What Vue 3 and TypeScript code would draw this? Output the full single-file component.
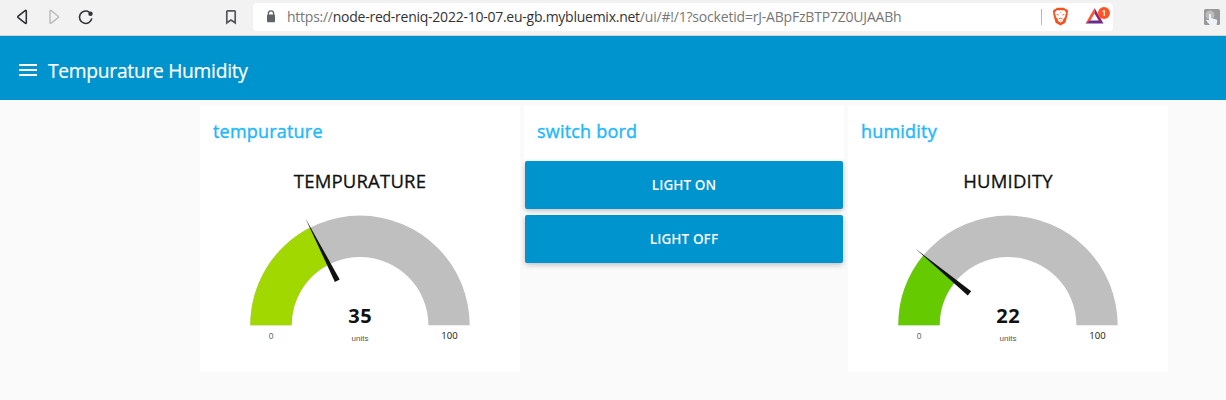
<script setup lang="ts">
interface Gauge {
  value: number
  fill: string
}

const temperature: Gauge = { value: 35, fill: '#a0d800' }
const humidity: Gauge = { value: 22, fill: '#65cb00' }

const panels = [
  { id: 't', title: 'tempurature', label: 'TEMPURATURE', gauge: temperature },
  { id: 's', title: 'switch bord', buttons: ['LIGHT ON', 'LIGHT OFF'] },
  { id: 'h', title: 'humidity', label: 'HUMIDITY', gauge: humidity },
]

const CX = 160
const CY = 125.3
const OUTER = 109.7
const INNER = 68.4

function point(percent: number, radius: number): [number, number] {
  const a = Math.PI * (1 - percent / 100)
  return [CX + radius * Math.cos(a), CY - radius * Math.sin(a)]
}

function arc(percent: number): string {
  const [x1, y1] = point(percent, OUTER)
  const [x2, y2] = point(percent, INNER)
  return `M${CX - OUTER} ${CY}A${OUTER} ${OUTER} 0 0 1 ${x1} ${y1}L${x2} ${y2}A${INNER} ${INNER} 0 0 0 ${CX - INNER} ${CY}Z`
}

function needle(percent: number): string {
  const [tx, ty] = point(percent, 120)
  const [bx, by] = point(percent, 50)
  const a = Math.PI * (1 - percent / 100)
  const dx = Math.sin(a) * 2.7
  const dy = Math.cos(a) * 2.7
  return `M${tx} ${ty}L${bx + dx} ${by + dy}L${bx - dx} ${by - dy}Z`
}
</script>

<template>
  <div class="window">
    <div class="browser">
      <svg class="nav" width="120" height="35" viewBox="0 0 120 35">
        <path d="M26.3 11.2v11.4q0 1.4-1.2.6l-6.9-5.6q-.8-.7 0-1.4l6.9-5.6q1.2-.8 1.2.6Z" fill="none" stroke="#303234" stroke-width="1.6" />
        <path d="M50 11.2v11.4q0 1.4 1.2.6l6.9-5.6q.8-.7 0-1.4l-6.9-5.6q-1.2-.8-1.2.6Z" fill="none" stroke="#bdbdbd" stroke-width="1.5" />
        <path d="M89.2 12.1A6.2 6.2 0 1 0 91.8 18.4" fill="none" stroke="#303234" stroke-width="1.6" />
        <circle cx="90.5" cy="13.7" r="2.2" fill="#303234" />
      </svg>
      <svg class="bookmark" width="12" height="16" viewBox="0 0 12 16">
        <path d="M2.6 1.8h6.8q.8 0 .8.8v11.2L6 11l-4.2 2.8V2.6q0-.8.8-.8Z" fill="none" stroke="#55575a" stroke-width="1.7" />
      </svg>
      <div class="address">
        <svg class="lock" width="10" height="13" viewBox="0 0 10 13">
          <path d="M2.4 6V3.4a2.6 2.6 0 0 1 5.2 0V6" fill="none" stroke="#5f6368" stroke-width="1.3" />
          <rect x="1" y="4.5" width="8" height="7.7" rx="1" fill="#5f6368" />
        </svg>
        <span class="url"><i>https://</i>node-red-reniq-2022-10-07.eu-gb.mybluemix.net<i class="path">/ui/#!/1?socketid=rJ-ABpFzBTP7Z0UJAABh</i></span>
        <span class="divider"></span>
        <svg class="shield" width="17" height="19" viewBox="0 0 17 19">
          <path d="M5 .7h7l1.6 1.6 1.2-.1 1.4 2-.6 1.8.2 1-2 7.6q-.3 1-1.2 1.6L8.5 18.4l-4.1-2.2q-.9-.6-1.2-1.6L1.2 7l.2-1L.8 4.2l1.4-2 1.2.1Z" fill="#f4511e" />
          <path d="M5 3 7 3.4 8.5 3 10 3.4 12 3 14.2 5.6 13.4 8 13 10 11.2 12.2 11 14 8.5 15.6 6 14 5.800 12.2 4 10 3.6 8 2.800 5.6Z" fill="#fff" />
          <path d="M4.600 7.400 6.700 8M12.400 7.400 10.300 8M6.600 12l1.900-.9 1.900.9" fill="none" stroke="#f4511e" stroke-width=".9" />
          <path d="M7.600 5.500h1.800M8.500 13v1" fill="none" stroke="#f78b68" stroke-width=".7" />
        </svg>
        <div class="rewards">
          <svg width="20" height="18" viewBox="0 0 20 18">
            <path d="M9.500 1 .5 16.500 5 14 9.500 6.500Z" fill="#ff5630" />
            <path d="M9.500 1 18.500 16.500 14 14 9.500 6.500Z" fill="#9e1f63" />
            <path d="M.5 16.500H18.500L14.500 13.500H5Z" fill="#662d91" />
          </svg>
          <b class="badge">1</b>
        </div>
      </div>
      <svg class="extension" width="16" height="16" viewBox="0 0 16 16">
        <rect width="16" height="16" rx="1.5" fill="#999" />
        <circle cx="6" cy="6" r="4.5" fill="#bdbdbd" />
        <path d="M5 5.500q1-1.500 2 0V9l5.500 1.500q1 .5.700 2L12.500 16H6L2 11.500q.5-1.500 3 0Z" fill="#edf3f8" />
      </svg>
    </div>

    <header class="toolbar">
      <div class="menu"><span></span><span></span><span></span></div>
      <h1>Tempurature Humidity</h1>
    </header>

    <main>
      <section v-for="panel in panels" :key="panel.id" :class="['card', panel.id]">
        <h2>{{ panel.title }}</h2>
        <template v-if="panel.gauge">
          <h3>{{ panel.label }}</h3>
          <svg class="gauge" width="320" height="172" viewBox="0 0 320 172">
            <path :d="arc(100)" fill="#bfbfbf" />
            <path :d="arc(panel.gauge.value)" :fill="panel.gauge.fill" />
            <path :d="needle(panel.gauge.value)" fill="#111" />
            <text class="value" x="160.3" y="122.5">{{ panel.gauge.value }}</text>
            <text class="units" x="160" y="141">units</text>
            <text class="min" x="71" y="139">0</text>
            <text class="max" x="249.5" y="139">100</text>
          </svg>
        </template>
        <div v-else class="buttons">
          <button v-for="label in panel.buttons" :key="label">{{ label }}</button>
        </div>
      </section>
    </main>
  </div>
</template>

<style>
body {
  background: #fafafa;
}
</style>

<style scoped>
.window {
  height: 400px;
  overflow: hidden;
  background: #fafafa;
  font-family: "Open Sans", "Noto Sans", sans-serif;
}
.browser {
  display: flex;
  box-sizing: border-box;
  height: 36px;
  background: #f2f2f2;
  border-bottom: 1px solid #d5d5d5;
}
.nav {
  flex: none;
}
.bookmark {
  margin: 9px 0 0 105px;
}
.address {
  display: flex;
  box-sizing: border-box;
  width: 860px;
  height: 28px;
  margin: 3px 0 0 16px;
  padding-left: 13px;
  background: #fff;
  border-radius: 4px;
}
.address > * {
  flex: none;
}
.lock {
  margin-top: 7px;
}
.url {
  width: 754px;
  margin-left: 11px;
  color: #333;
  font-size: 14px;
  letter-spacing: -0.25px;
  line-height: 28px;
  white-space: nowrap;
}
.url i {
  color: #777;
  font-style: normal;
}
.url .path {
  letter-spacing: -0.2px;
}
.divider {
  width: 1px;
  height: 16px;
  margin-top: 6px;
  background: #b8b8b8;
}
.shield {
  margin: 4px 0 0 10px;
}
.rewards {
  position: relative;
  margin: 4px 0 0 16px;
}
.badge {
  position: absolute;
  top: 0;
  left: 13px;
  width: 12px;
  height: 12px;
  border-radius: 6px;
  background: #fb542b;
  color: #fff;
  font-size: 8px;
  font-weight: 600;
  line-height: 12px;
  text-align: center;
}
.extension {
  margin: 9px 0 0 91px;
}
.toolbar {
  display: flex;
  align-items: center;
  height: 64px;
  padding-left: 19px;
  background: #0094ce;
  color: #fff;
}
.menu {
  display: grid;
  gap: 3px;
  width: 18px;
  margin-top: 12px;
  align-self: start;
  padding-top: 16px;
}
.menu span {
  height: 2px;
  background: #fff;
}
h1,
h2,
h3 {
  margin: 0;
  font-weight: 400;
  white-space: nowrap;
}
h1 {
  margin: 5px 0 0 11px;
  font-size: 19.2px;
  letter-spacing: -0.26px;
  line-height: 28px;
  -webkit-text-stroke: 0.2px currentColor;
}
main {
  display: flex;
  align-items: flex-start;
  gap: 4px;
  padding: 6px 0 0 200px;
}
.card {
  width: 320px;
  height: 266px;
  background: #fff;
}
.card.s {
  height: 160px;
}
h2 {
  height: 55px;
  padding-left: 13px;
  color: #1fb8fc;
  font-size: 18px;
  letter-spacing: 0.2px;
  line-height: 51px;
  -webkit-text-stroke: 0.4px currentColor;
}
h3 {
  height: 39px;
  color: #111;
  font-size: 18.5px;
  letter-spacing: 0.2px;
  line-height: 39px;
  text-align: center;
  -webkit-text-stroke: 0.3px currentColor;
}
.gauge {
  display: block;
}
text {
  text-anchor: middle;
  font-family: "Liberation Sans", Arial, sans-serif;
}
.value {
  fill: #111;
  font: 700 20px "Open Sans", sans-serif;
  letter-spacing: 0.5px;
}
.units {
  fill: #555;
  font-size: 8px;
}
.min {
  fill: #666;
  font-size: 8.5px;
}
.max {
  fill: #111;
  font: 9.5px "Open Sans", sans-serif;
}
.buttons {
  display: grid;
  gap: 6px;
  padding: 0 1px;
}
button {
  height: 48px;
  padding: 0;
  border: 0;
  border-radius: 2px;
  background: #0094ce;
  box-shadow: 0 2px 5px rgba(0, 0, 0, 0.26);
  color: #fff;
  font: 600 13.5px "Open Sans", sans-serif;
  letter-spacing: 0.1px;
}
</style>
